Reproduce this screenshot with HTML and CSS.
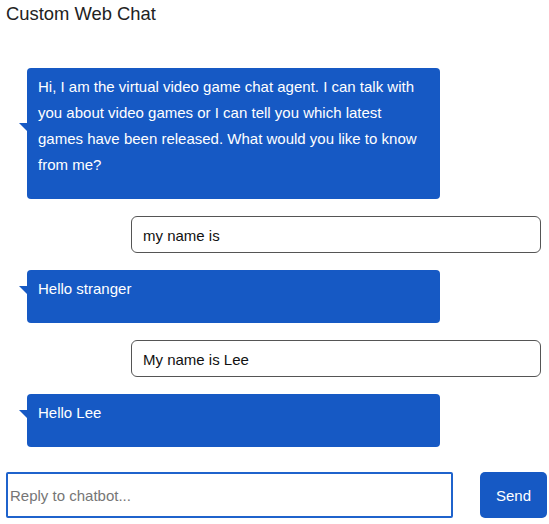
FILE: index.html
```html
<!DOCTYPE html>
<html>
<head>
<meta charset="utf-8">
<link rel="stylesheet" href="styles.css">
</head>
<body>
<h1 class="title">Custom Web Chat</h1>
<div class="messages">
  <div class="msg bot">Hi, I am the virtual video game chat agent. I can talk with you about video games or I can tell you which latest games have been released. What would you like to know from me?</div>
  <div class="msg user">my name is</div>
  <div class="msg bot">Hello stranger</div>
  <div class="msg user">My name is Lee</div>
  <div class="msg bot">Hello Lee</div>
</div>
<form class="composer" onsubmit="return false">
  <input class="reply" type="text" placeholder="Reply to chatbot...">
  <button class="send" type="button">Send</button>
</form>
</body>
</html>
```
FILE: styles.css
```css
html, body {
  margin: 0;
  padding: 0;
  background: #ffffff;
}
body {
  padding: 0 0 0 6px;
  font-family: "Liberation Sans", Arial, sans-serif;
  color: #1a1a1a;
}
.title {
  margin: 0;
  padding-top: 3px;
  font-size: 18.4px;
  font-weight: normal;
  line-height: 22px;
  color: #222;
}
.messages {
  display: flex;
  flex-direction: column;
  gap: 17px;
  padding-top: 43px;
}
.msg {
  box-sizing: border-box;
  font-size: 15px;
}
.bot {
  position: relative;
  margin-left: 21px;
  width: 413px;
  background: #1659c4;
  color: #ffffff;
  border-radius: 4px;
  padding: 6px 11px 21px 11px;
  line-height: 26px;
}
.bot::before {
  content: "";
  position: absolute;
  left: -8px;
  top: calc(50% - 11px);
  width: 0;
  height: 0;
  border-top: 8px solid #1659c4;
  border-left: 8px solid transparent;
}
.user {
  margin-left: 125px;
  width: 410px;
  height: 37px;
  border: 1px solid #555;
  border-radius: 6px;
  padding: 1px 11px 0 11px;
  line-height: 35px;
  color: #111;
  background: #fff;
}
.composer {
  display: flex;
  gap: 27px;
  margin: 25px 0 0 0;
}
.reply {
  flex: none;
  box-sizing: border-box;
  width: 447px;
  height: 46px;
  border: 2px solid #1f63cc;
  border-radius: 2px;
  padding: 0 2px;
  font-family: "Liberation Sans", Arial, sans-serif;
  font-size: 15px;
  outline: none;
}
.reply::placeholder {
  color: #767676;
}
.send {
  flex: none;
  width: 67px;
  height: 46px;
  border: none;
  border-radius: 5px;
  background: #1659c4;
  color: #fff;
  font-family: "Liberation Sans", Arial, sans-serif;
  font-size: 15px;
  padding: 0;
}
```
